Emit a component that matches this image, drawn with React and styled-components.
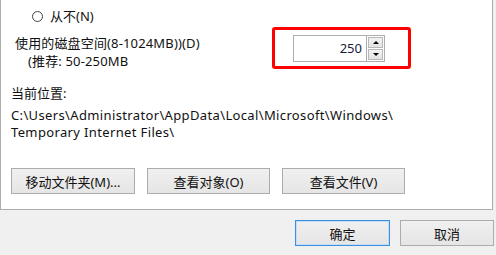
import React from "react";
import styled, { createGlobalStyle } from "styled-components";

const GlobalStyle = createGlobalStyle`
  *, *::before, *::after {
    box-sizing: border-box;
  }
  html, body {
    margin: 0;
    padding: 0;
    background: #f0f0f0;
    overflow: hidden;
  }
  body {
    font-family: "Noto Sans", "Noto Sans CJK SC", sans-serif;
    font-size: 13px;
    color: #111;
  }
`;

const Window = styled.div`
  width: 496px;
  height: 255px;
  background: #f0f0f0;
`;

const Panel = styled.div`
  width: 493px;
  height: 210px;
  background: #fff;
  border: 1px solid #adadad;
  border-top: none;
  display: flex;
  flex-direction: column;
`;

const RadioRow = styled.label`
  display: flex;
  align-items: center;
  gap: 7px;
  height: 18px;
  line-height: 18px;
  margin: 7px 0 2px 31px;
`;

const RadioDot = styled.span`
  width: 11px;
  height: 11px;
  border: 1px solid #444;
  border-radius: 50%;
  background: #fff;
`;

const DiskRow = styled.div`
  display: flex;
  align-items: flex-start;
`;

const DiskLabel = styled.div`
  width: 271px;
  padding-left: 14px;
  padding-top: 7px;
  line-height: 18px;
  letter-spacing: 0.15px;
`;

const Indent = styled.div`
  padding-left: 13px;
`;

const Highlight = styled.div`
  width: 139px;
  height: 42px;
  border: 3px solid #f00;
  border-radius: 3px;
  display: flex;
  align-items: center;
  padding-left: 18px;
`;

const SpinBox = styled.div`
  display: flex;
  height: 27px;
`;

const SpinInput = styled.div`
  width: 73px;
  border: 1px solid #abadb3;
  border-right: none;
  background: #fff;
  text-align: right;
  padding-right: 4px;
  line-height: 25px;
  color: #1a1a3a;
`;

const SpinButtons = styled.div`
  width: 19px;
  display: flex;
  flex-direction: column;
  border: 1px solid #abadb3;
  padding: 1px;
  gap: 1px;
  background: #fff;
`;

const SpinButton = styled.div`
  flex: 1;
  background: linear-gradient(#f2f2f2, #e3e3e3);
  border: 1px solid #b8b8b8;
  display: flex;
  align-items: center;
  justify-content: center;
`;

const Triangle = styled.span`
  width: 0;
  height: 0;
  border-left: 3px solid transparent;
  border-right: 3px solid transparent;
  ${(p) =>
    p.$down ? "border-top: 3px solid #000;" : "border-bottom: 3px solid #000;"}
`;

const Caption = styled.div`
  margin: 14px 0 0 10px;
  line-height: 18px;
`;

const PathText = styled.div`
  margin: 5px 0 0 10px;
  line-height: 17px;
  letter-spacing: 0.36px;
`;

const ButtonRow = styled.div`
  display: flex;
  gap: 12px;
  margin: 27px 0 0 10px;
`;

const Button = styled.button`
  font-family: inherit;
  font-size: 13px;
  color: #111;
  width: ${(p) => p.$width || 124}px;
  height: 26px;
  padding: 0;
  background: linear-gradient(#f0f0f0, #e5e5e5);
  border: 1px solid ${(p) => (p.$default ? "#3c8fdc" : "#acacac")};
  box-shadow: ${(p) => (p.$default ? "inset 0 0 0 1px #c4dcf4" : "none")};
  border-radius: 0;
`;

const Footer = styled.div`
  display: flex;
  justify-content: flex-end;
  gap: 10px;
  padding: 10px 2px 0 0;
`;

export default function App() {
  return (
    <Window>
      <GlobalStyle />
      <Panel>
        <RadioRow>
          <RadioDot />
          <span>从不(N)</span>
        </RadioRow>
        <DiskRow>
          <DiskLabel>
            <div>使用的磁盘空间(8-1024MB))(D)</div>
            <Indent>(推荐: 50-250MB</Indent>
          </DiskLabel>
          <Highlight>
            <SpinBox>
              <SpinInput>250</SpinInput>
              <SpinButtons>
                <SpinButton>
                  <Triangle />
                </SpinButton>
                <SpinButton>
                  <Triangle $down />
                </SpinButton>
              </SpinButtons>
            </SpinBox>
          </Highlight>
        </DiskRow>
        <Caption>当前位置:</Caption>
        <PathText>
          C:\Users\Administrator\AppData\Local\Microsoft\Windows\
          <br />
          Temporary Internet Files\
        </PathText>
        <ButtonRow>
          <Button>移动文件夹(M)...</Button>
          <Button $width={123}>查看对象(O)</Button>
          <Button $width={123}>查看文件(V)</Button>
        </ButtonRow>
      </Panel>
      <Footer>
        <Button $width={95} $default>
          确定
        </Button>
        <Button $width={94}>取消</Button>
      </Footer>
    </Window>
  );
}
